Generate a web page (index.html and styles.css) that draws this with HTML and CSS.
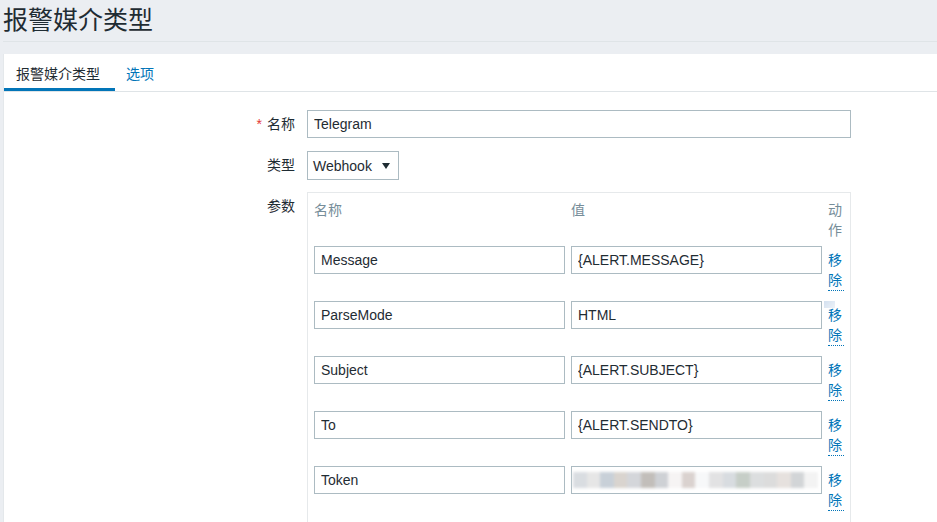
FILE: index.html
```html
<!DOCTYPE html>
<html lang="zh-CN">
<head>
<meta charset="utf-8">
<title>报警媒介类型</title>
<link rel="stylesheet" href="styles.css">
</head>
<body>
<div class="page">
  <header class="title-bar">
    <h1 class="title">报警媒介类型</h1>
  </header>
  <main class="panel">
    <nav class="tabs">
      <span class="tab tab-active">报警媒介类型</span>
      <a class="tab tab-link" href="#">选项</a>
    </nav>
    <form class="form">
      <div class="form-row">
        <label class="form-label required">名称</label>
        <div class="form-field"><input class="text-input name-input" type="text" value="Telegram"></div>
      </div>
      <div class="form-row row-type">
        <label class="form-label">类型</label>
        <div class="form-field">
          <div class="select-box">
            <span class="select-text">Webhook</span>
            <svg class="select-arrow" width="8" height="6" viewBox="0 0 8 6"><polygon points="0,0 8,0 4,6" fill="#1f2c33"/></svg>
          </div>
        </div>
      </div>
      <div class="form-row">
        <label class="form-label">参数</label>
        <div class="form-field">
          <div class="params">
            <div class="params-head">名称</div>
            <div class="params-head">值</div>
            <div class="params-head">动作</div>

            <input class="text-input" type="text" value="Message">
            <input class="text-input" type="text" value="{ALERT.MESSAGE}">
            <div class="action-cell"><a class="action-link" href="#">移除</a></div>

            <input class="text-input" type="text" value="ParseMode">
            <input class="text-input" type="text" value="HTML">
            <div class="action-cell"><span class="glint"></span><a class="action-link" href="#">移除</a></div>

            <input class="text-input" type="text" value="Subject">
            <input class="text-input" type="text" value="{ALERT.SUBJECT}">
            <div class="action-cell"><a class="action-link" href="#">移除</a></div>

            <input class="text-input" type="text" value="To">
            <input class="text-input" type="text" value="{ALERT.SENDTO}">
            <div class="action-cell"><a class="action-link" href="#">移除</a></div>

            <input class="text-input" type="text" value="Token">
            <div class="text-input token-input">
              <div class="token-blur">
                <span class="b1"></span><span class="b2"></span><span class="b3"></span><span class="b4"></span><span class="b5"></span><span class="b6"></span><span class="b7"></span><span class="b8"></span><span class="b9"></span><span class="b10"></span><span class="b11"></span><span class="b12"></span><span class="b13"></span><span class="b14"></span><span class="b15"></span><span class="b16"></span><span class="b17"></span><span class="b18"></span>
              </div>
            </div>
            <div class="action-cell"><a class="action-link" href="#">移除</a></div>
          </div>
        </div>
      </div>
    </form>
  </main>
</div>
</body>
</html>
```
FILE: styles.css
```css
html, body {
  margin: 0;
  padding: 0;
  height: 100%;
  overflow: hidden;
}
body {
  background: #ebeef2;
  font-family: "Liberation Sans", "Noto Sans CJK SC", sans-serif;
  font-size: 14px;
  color: #1f2c33;
}
.page {
  padding-left: 3px;
}
.title-bar {
  height: 41px;
  border-bottom: 1px solid #dfe4e7;
}
.title {
  margin: 0;
  font-size: 25px;
  line-height: 41px;
  font-weight: normal;
  color: #1f2c33;
}
.panel {
  margin-top: 12px;
  background: #ffffff;
  border-left: 1px solid #e4e8eb;
  min-height: 600px;
}
.tabs {
  display: flex;
  border-bottom: 1px solid #dfe4e7;
}
.tab {
  display: block;
  padding: 10px 15px 4px 12px;
  line-height: 20px;
  border-bottom: 3px solid transparent;
  text-decoration: none;
}
.tab-link {
  padding-left: 11px;
}
.tab-active {
  color: #1f2c33;
  border-bottom-color: #0275b8;
}
.tab-link {
  color: #0275b8;
}
.form {
  padding-top: 18px;
  display: flex;
  flex-direction: column;
}
.form-row {
  display: grid;
  grid-template-columns: 291px 544px;
  column-gap: 12px;
  margin-bottom: 13px;
}
.row-type {
  margin-bottom: 12px;
}
.form-label {
  text-align: right;
  line-height: 28px;
  color: #1f2c33;
}
.required::before {
  content: "*";
  color: #e33734;
  margin-right: 5px;
}
.text-input {
  box-sizing: border-box;
  height: 28px;
  border: 1px solid #acbbc2;
  padding: 0 6px;
  font-family: "Liberation Sans", "Noto Sans CJK SC", sans-serif;
  font-size: 14px;
  color: #1f2c33;
  background: #ffffff;
  margin: 0;
  outline: none;
  width: 100%;
}
.name-input {
  width: 544px;
}
.select-box {
  box-sizing: border-box;
  width: 92px;
  height: 29px;
  border: 1px solid #acbbc2;
  padding: 0 8px 0 5px;
  display: flex;
  align-items: center;
  justify-content: space-between;
  background: #ffffff;
}
.select-text {
  line-height: 20px;
}
.select-arrow {
  display: block;
}
.params {
  box-sizing: border-box;
  width: 544px;
  border: 1px solid #e6e9eb;
  padding: 7px 6px 30px 6px;
  display: grid;
  grid-template-columns: 251px 251px 16px;
  grid-template-rows: 40px;
  grid-auto-rows: 49px;
  column-gap: 6px;
  row-gap: 6px;
}
.params-head {
  color: #768d99;
  line-height: 20px;
}
.action-cell {
  position: relative;
  padding-top: 4px;
}
.action-link {
  display: inline-block;
  color: #0275b8;
  text-decoration: none;
  line-height: 20px;
  border-bottom: 1px dotted #0275b8;
}
.glint {
  position: absolute;
  left: -4px;
  top: 0;
  width: 11px;
  height: 7px;
  background: linear-gradient(135deg, #d3e0ef, #edf2f8);
}
.token-input {
  display: flex;
  align-items: center;
  padding: 0 3px 0 1px;
}
.token-blur {
  display: flex;
  width: 245px;
  height: 16px;
  filter: blur(1.4px);
}
.token-blur span {
  flex: 1;
  height: 100%;
}
.b1 { background: #d9dde1; }
.b2 { background: #e6e6e6; }
.b3 { background: #c8d0d8; }
.b4 { background: #d9d4cf; }
.b5 { background: #d4d6da; }
.b6 { background: #c2beba; }
.b7 { background: #ced1d5; }
.b8 { background: #f6f4f4; }
.b9 { background: #dad2cf; }
.b10 { background: #f7f8f9; }
.b11 { background: #e2e2e3; }
.b12 { background: #d8dce0; }
.b13 { background: #c6cec7; }
.b14 { background: #dcdedf; }
.b15 { background: #dcdcdc; }
.b16 { background: #e6e1de; }
.b17 { background: #d2d5d7; }
.b18 { background: #f3f3f3; }
```
